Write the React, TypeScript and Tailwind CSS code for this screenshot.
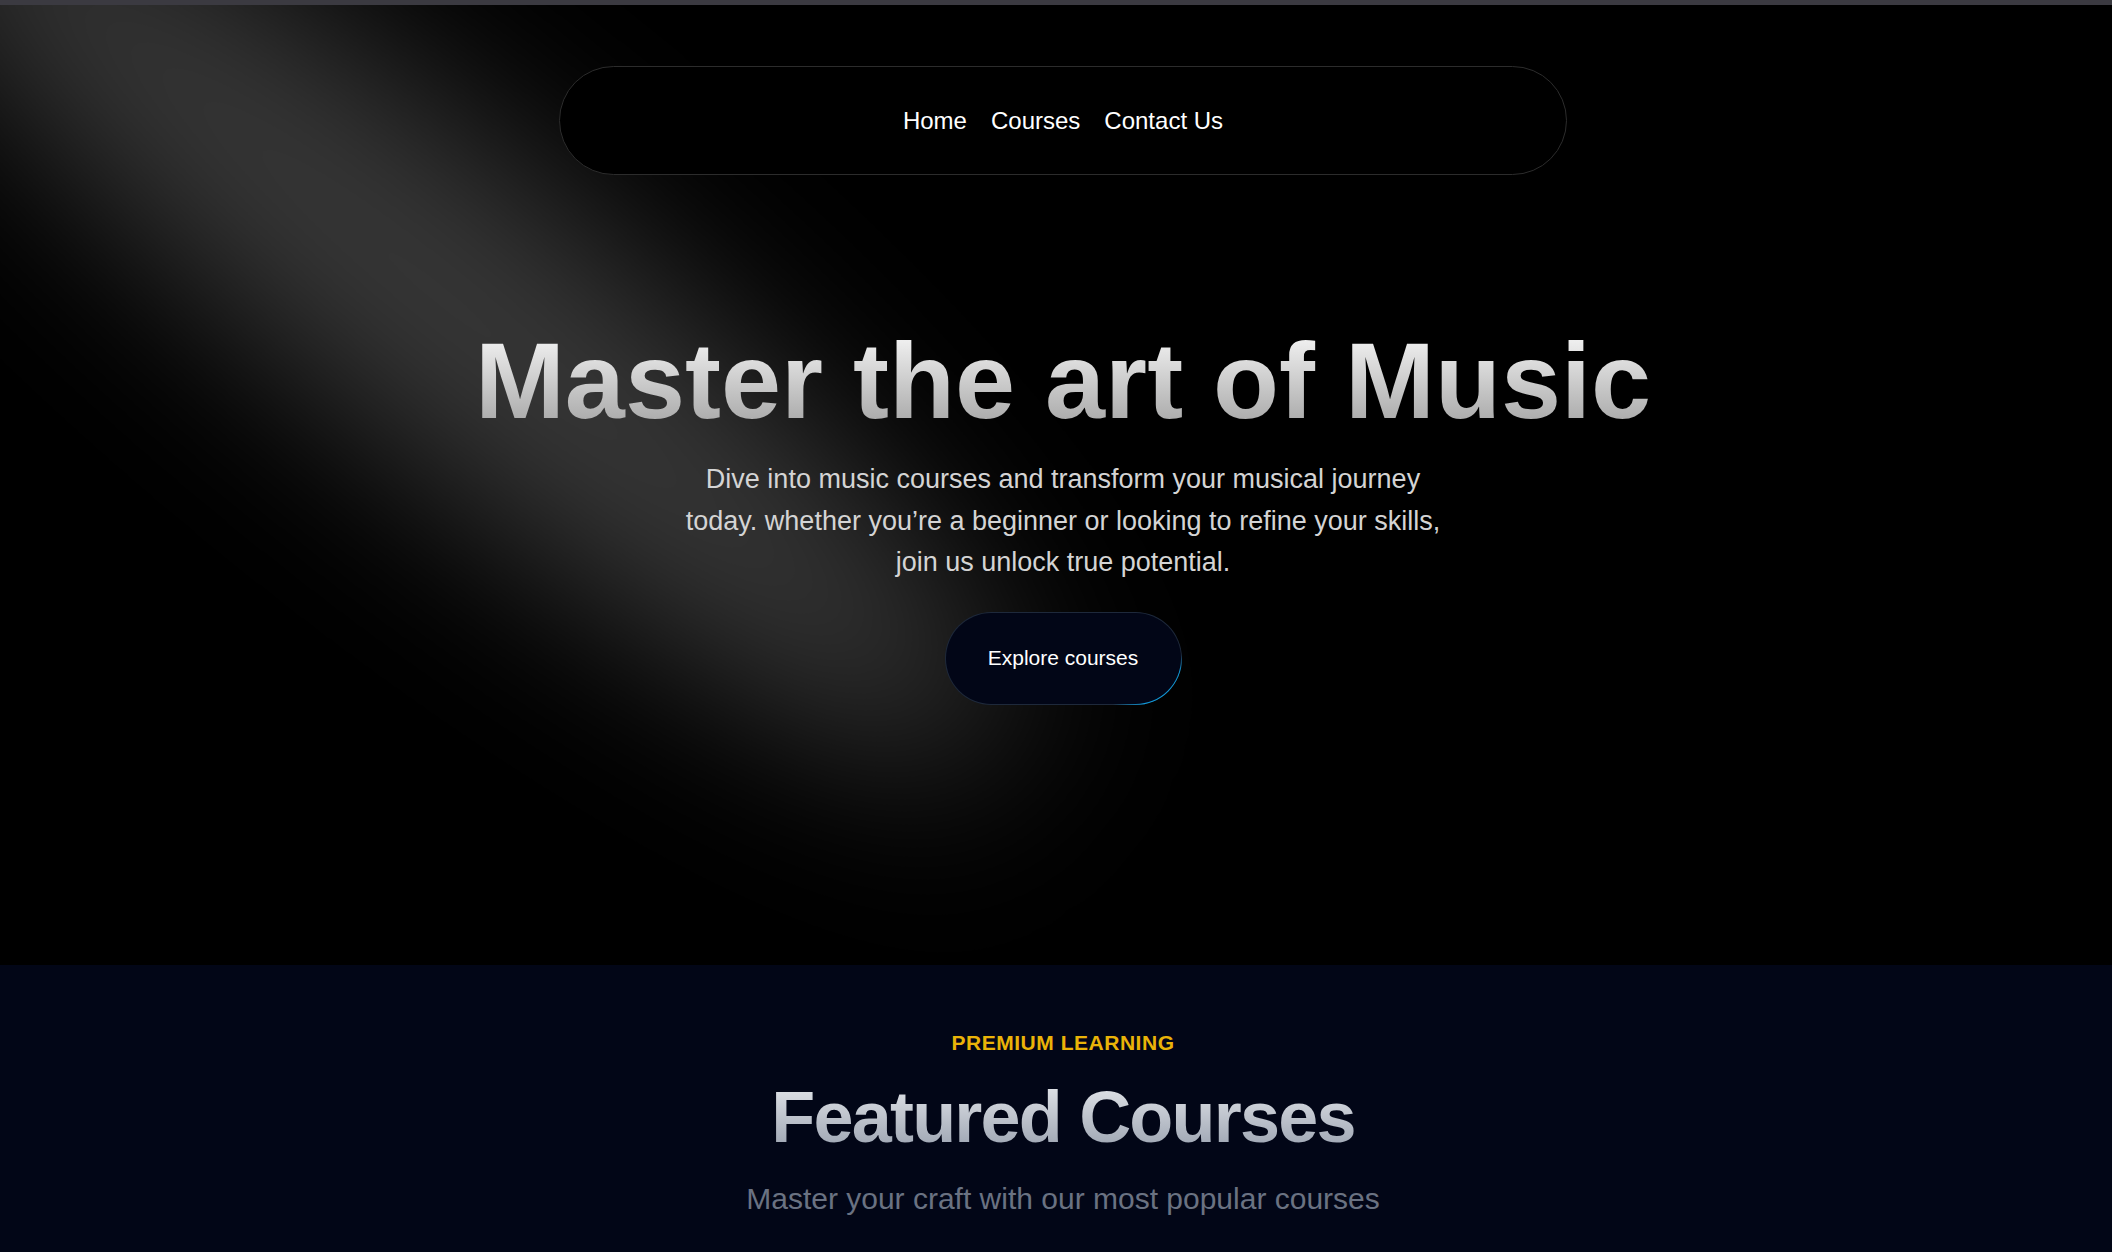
import React from 'react';

const navLinks = ['Home', 'Courses', 'Contact Us'];

// static spotlight beam, drawn in hero pixel space
const Spotlight: React.FC = () => (
  <svg
    className="pointer-events-none absolute inset-0 h-full w-full"
    viewBox="0 0 2112 960"
    preserveAspectRatio="none"
    fill="none"
  >
    <defs>
      <filter id="spot-blur" x="-1000" y="-1000" width="4112" height="2960" filterUnits="userSpaceOnUse">
        <feGaussianBlur stdDeviation="90" />
      </filter>
    </defs>
    <ellipse
      cx="440"
      cy="290"
      rx="730"
      ry="150"
      transform="rotate(39 440 290)"
      fill="white"
      fillOpacity="0.22"
      filter="url(#spot-blur)"
    />
  </svg>
);

const App: React.FC = () => {
  return (
    <div className="min-h-screen w-full bg-black font-['Liberation_Sans',Arial,sans-serif] antialiased">
      <div className="h-[5px] w-full bg-[#3b3a41]" />

      {/* Hero */}
      <section className="relative h-[960px] w-full overflow-hidden bg-black">
        <Spotlight />
        <div className="relative z-10 flex flex-col items-center pt-[61px] pl-[14px]">
          <nav className="flex h-[109px] w-[1008px] items-center justify-center rounded-full border border-[#2c2c2c] bg-black">
            <ul className="flex items-center gap-6">
              {navLinks.map((link) => (
                <li key={link}>
                  <a href="#" className="text-2xl text-white">
                    {link}
                  </a>
                </li>
              ))}
            </ul>
          </nav>

          <h1 className="mt-[152px] bg-gradient-to-b from-neutral-50 to-neutral-400 bg-clip-text text-center text-[108px] font-bold leading-none text-transparent">
            Master the art of Music
          </h1>
          <p className="mt-6 max-w-[770px] text-center text-[27px] leading-[41.5px] text-neutral-300">
            Dive into music courses and transform your musical journey today. whether you’re a beginner or looking to refine your skills, join us unlock true potential.
          </p>

          <a
            href="#"
            className="relative mt-7 block h-[93px] w-[237px] overflow-hidden rounded-full bg-[#1e293b] p-px"
          >
            <span className="absolute right-[-49px] bottom-[-25px] h-20 w-32 bg-[radial-gradient(#0ea5e9_35%,transparent_65%)] opacity-90" />
            <span className="relative flex h-full w-full items-center justify-center rounded-full bg-[#020617] text-[21px] text-white">
              Explore courses
            </span>
          </a>
        </div>
      </section>

      {/* Featured */}
      <section className="w-full bg-[#020617] pt-16 pb-24 pl-[14px]">
        <div className="flex flex-col items-center text-center">
          <span className="text-[21px] leading-7 font-bold tracking-wide text-[#eab308]">PREMIUM LEARNING</span>
          <h2 className="mt-6 bg-gradient-to-b from-gray-200 to-gray-400 bg-clip-text text-7xl leading-none font-bold tracking-tight text-transparent">
            Featured Courses
          </h2>
          <p className="mt-7 text-3xl text-gray-500">Master your craft with our most popular courses</p>
        </div>
      </section>
    </div>
  );
};

export default App;
